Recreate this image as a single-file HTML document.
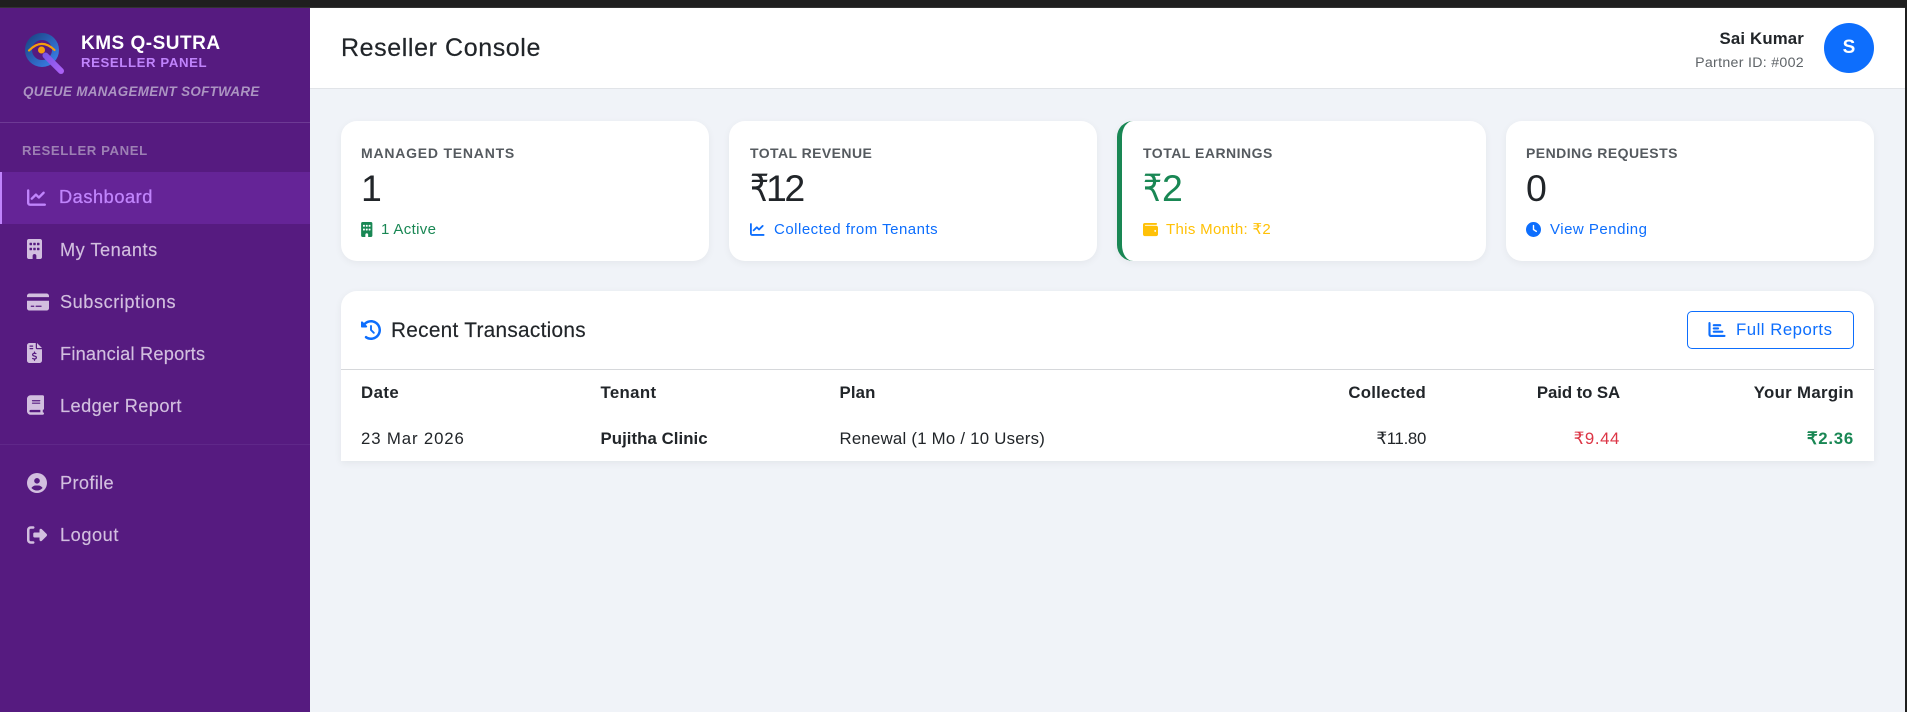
<!DOCTYPE html>
<html lang="en">
<head>
<meta charset="utf-8">
<title>Reseller Console</title>
<style>
html,body{margin:0;padding:0;width:1907px;height:712px;overflow:hidden;background:#1f1f1f}
body{font-family:"Liberation Sans",Arial,sans-serif;position:relative}
.b{position:absolute}
.t{position:absolute;white-space:nowrap;line-height:20px;height:20px}
.r{text-align:right}
svg{position:absolute;display:block}
.nav{color:#d2bfdf;font-size:18.2px;-webkit-text-stroke:.15px #d2bfdf}
.card{position:absolute;top:121px;height:140px;background:#fff;border-radius:16px;box-shadow:0 2px 8px rgba(0,0,0,.05);box-sizing:border-box}
.lab{color:#555a5f;font-size:14px;font-weight:bold;top:143px}
.val{color:#212529;font-size:37.5px;top:178px;line-height:20px}
.rs{display:inline-block;transform:scaleX(.8);transform-origin:0 50%}
.sub{font-size:15px;top:220px}
.th{color:#212529;font-size:16.8px;font-weight:bold;top:383px}
.td{color:#212529;font-size:16.8px;top:429px}
</style>
</head>
<body>
<div class="b" style="left:0;top:7px;width:1905px;height:1px;background:#333"></div>
<div class="b" style="left:0;top:8px;width:1905px;height:704px;background:#f0f3f8"></div>

<!-- sidebar -->
<div class="b" style="left:0;top:8px;width:310px;height:704px;background:#561b80"></div>
<div class="b" style="left:0;top:122px;width:310px;height:1px;background:#6d3a94"></div>
<div class="b" style="left:0;top:444px;width:310px;height:1px;background:#5f2889"></div>

<svg style="left:20px;top:30px" width="50" height="48" viewBox="0 0 50 48">
<defs><linearGradient id="g" x1="0" y1="0" x2="1" y2="1"><stop offset="0" stop-color="#1c4688"/><stop offset="1" stop-color="#3a7fe8"/></linearGradient>
<linearGradient id="h" x1="0" y1="0" x2="1" y2="1"><stop offset="0" stop-color="#7c55e6"/><stop offset="1" stop-color="#a960f5"/></linearGradient></defs>
<circle cx="22" cy="20" r="13.500" fill="none" stroke="url(#g)" stroke-width="7"/>
<path d="M25.500 25.500L41 41" stroke="url(#h)" stroke-width="6" stroke-linecap="round"/>
<path d="M9 20.500Q21.500 7.500 34.500 20" fill="none" stroke="#f59e0b" stroke-width="2.200" stroke-linecap="round"/>
<circle cx="21.500" cy="20" r="3.500" fill="#f59e0b"/>
</svg>

<div class="t" style="left:81px;top:34px;color:#fff;font-size:19px;font-weight:bold;letter-spacing:.5px">KMS Q-SUTRA</div>
<div class="t" style="left:81px;top:53px;color:#c084fc;font-size:13.2px;font-weight:bold;letter-spacing:.6px">RESELLER PANEL</div>
<div class="t" style="left:23px;top:82px;color:#ac95c2;font-size:13.4px;font-weight:bold;font-style:italic;letter-spacing:.33px">QUEUE MANAGEMENT SOFTWARE</div>
<div class="t" style="left:22px;top:141px;color:#9d80b4;font-size:13.2px;font-weight:bold;letter-spacing:.57px">RESELLER PANEL</div>

<div class="b" style="left:0;top:172px;width:310px;height:52px;background:#652497"></div>
<div class="b" style="left:0;top:172px;width:2px;height:52px;background:#c084fc"></div>

<svg style="left:27px;top:189px" width="19" height="17" viewBox="0 32 512 448" fill="#c084fc"><path d="M64 64c0-17.700-14.300-32-32-32S0 46.300 0 64V400c0 44.200 35.800 80 80 80H480c17.700 0 32-14.300 32-32s-14.300-32-32-32H80c-8.800 0-16-7.200-16-16V64zm406.600 86.600c12.500-12.500 12.500-32.800 0-45.300s-32.800-12.500-45.300 0L320 210.700l-57.400-57.400c-12.500-12.500-32.800-12.500-45.300 0l-112 112c-12.500 12.500-12.500 32.800 0 45.300s32.800 12.500 45.300 0L240 221.300l57.400 57.400c12.500 12.500 32.800 12.500 45.300 0l128-128z"/></svg>
<div class="t" style="left:59px;top:187px;color:#c084fc;font-size:18.2px;letter-spacing:.55px;-webkit-text-stroke:.3px #c084fc">Dashboard</div>

<svg style="left:27px;top:239px" width="15" height="20" viewBox="0 0 384 512" fill="#d2bfdf"><path d="M48 0C21.500 0 0 21.500 0 48V464c0 26.500 21.500 48 48 48h96V432c0-26.500 21.500-48 48-48s48 21.500 48 48v80h96c26.500 0 48-21.500 48-48V48c0-26.500-21.500-48-48-48H48zM64 240c0-8.800 7.200-16 16-16h32c8.800 0 16 7.200 16 16v32c0 8.800-7.200 16-16 16H80c-8.800 0-16-7.200-16-16V240zm112-16h32c8.800 0 16 7.200 16 16v32c0 8.800-7.200 16-16 16H176c-8.800 0-16-7.200-16-16V240c0-8.800 7.200-16 16-16zm80 16c0-8.800 7.200-16 16-16h32c8.800 0 16 7.200 16 16v32c0 8.800-7.200 16-16 16H272c-8.800 0-16-7.200-16-16V240zM80 96h32c8.800 0 16 7.200 16 16v32c0 8.800-7.200 16-16 16H80c-8.800 0-16-7.200-16-16V112c0-8.800 7.200-16 16-16zm80 16c0-8.800 7.200-16 16-16h32c8.800 0 16 7.200 16 16v32c0 8.800-7.200 16-16 16H176c-8.800 0-16-7.200-16-16V112zM272 96h32c8.800 0 16 7.200 16 16v32c0 8.800-7.200 16-16 16H272c-8.800 0-16-7.200-16-16V112c0-8.800 7.200-16 16-16z"/></svg>
<div class="t nav" style="left:60px;top:240px;letter-spacing:.5px">My Tenants</div>

<svg style="left:27px;top:292px" width="22" height="20" viewBox="0 0 576 512" fill="#d2bfdf"><path d="M64 32C28.700 32 0 60.700 0 96v32H576V96c0-35.300-28.700-64-64-64H64zM576 224H0V416c0 35.300 28.700 64 64 64H512c35.300 0 64-28.700 64-64V224zM112 352h64c8.800 0 16 7.200 16 16s-7.200 16-16 16H112c-8.800 0-16-7.200-16-16s7.200-16 16-16zm112 16c0-8.800 7.200-16 16-16H368c8.800 0 16 7.200 16 16s-7.200 16-16 16H240c-8.800 0-16-7.200-16-16z"/></svg>
<div class="t nav" style="left:60px;top:292px;letter-spacing:.53px">Subscriptions</div>

<svg style="left:27px;top:343px" width="15" height="20" viewBox="0 0 384 512" fill="#d2bfdf"><path d="M64 0C28.700 0 0 28.700 0 64V448c0 35.300 28.700 64 64 64H320c35.300 0 64-28.700 64-64V160H256c-17.700 0-32-14.300-32-32V0H64zM256 0V128H384L256 0zM64 80c0-8.800 7.200-16 16-16h64c8.800 0 16 7.200 16 16s-7.200 16-16 16H80c-8.800 0-16-7.200-16-16zm0 64c0-8.800 7.200-16 16-16h64c8.800 0 16 7.200 16 16s-7.200 16-16 16H80c-8.800 0-16-7.200-16-16zm128 72c8.800 0 16 7.200 16 16v17.300c8.500 1.200 16.700 3.100 24.100 5.100c8.500 2.300 13.600 11 11.300 19.600s-11 13.600-19.600 11.300c-11.100-3-22-5.200-32.100-5.300c-8.400-.1-17.400 1.800-23.600 5.500c-5.700 3.400-8.100 7.300-8.100 12.800c0 3.700 1.300 6.500 7.300 10.100c6.900 4.100 16.600 7.100 29.200 10.900l.5 .1 0 0 0 0c11.300 3.400 25.300 7.600 36.300 14.600c12.100 7.600 22.400 19.700 22.700 38.200c.3 19.300-9.600 33.300-22.900 41.600c-7.700 4.800-16.400 7.600-25.100 9.100V440c0 8.800-7.200 16-16 16s-16-7.200-16-16V422.200c-11.200-2.100-21.700-5.700-30.900-8.900l0 0 0 0c-2.100-.7-4.200-1.400-6.200-2.100c-8.400-2.800-12.900-11.900-10.100-20.200s11.900-12.900 20.200-10.100c2.500 .8 4.800 1.600 7.100 2.400l0 0 0 0 0 0c13.600 4.600 24.600 8.400 36.300 8.700c9.100 .3 17.900-1.700 23.700-5.300c5.100-3.200 7.900-7.300 7.800-14c-.1-4.600-1.800-7.800-7.700-11.600c-6.800-4.300-16.500-7.400-29-11.200l-1.600-.5 0 0c-11-3.300-24.300-7.300-34.800-13.700c-12-7.200-22.600-18.900-22.700-37.300c-.1-19.400 10.800-32.800 23.800-40.500c7.500-4.400 15.800-7.200 24.100-8.700V232c0-8.800 7.200-16 16-16z"/></svg>
<div class="t nav" style="left:60px;top:344px;letter-spacing:.22px">Financial Reports</div>

<svg style="left:27px;top:395px" width="17" height="20" viewBox="0 0 448 512" fill="#d2bfdf"><path d="M96 0C43 0 0 43 0 96V416c0 53 43 96 96 96H384h32c17.700 0 32-14.300 32-32s-14.300-32-32-32V384c17.700 0 32-14.300 32-32V32c0-17.700-14.300-32-32-32H384 96zm0 384H352v64H96c-17.700 0-32-14.300-32-32s14.300-32 32-32zm32-240c0-8.800 7.200-16 16-16H336c8.800 0 16 7.200 16 16s-7.200 16-16 16H144c-8.800 0-16-7.200-16-16zm16 48H336c8.800 0 16 7.200 16 16s-7.200 16-16 16H144c-8.800 0-16-7.200-16-16s7.200-16 16-16z"/></svg>
<div class="t nav" style="left:60px;top:396px;letter-spacing:.43px">Ledger Report</div>

<svg style="left:27px;top:473px" width="20" height="20" viewBox="0 0 512 512" fill="#d2bfdf"><path d="M399 384.200C376.900 345.800 335.400 320 288 320H224c-47.400 0-88.900 25.800-111 64.200c35.200 39.200 86.200 63.800 143 63.800s107.800-24.700 143-63.800zM0 256a256 256 0 1 1 512 0A256 256 0 1 1 0 256zm256 16a72 72 0 1 0 0-144 72 72 0 1 0 0 144z"/></svg>
<div class="t nav" style="left:60px;top:473px;letter-spacing:.35px">Profile</div>

<svg style="left:27px;top:525px" width="20" height="20" viewBox="0 0 512 512" fill="#d2bfdf"><path d="M377.900 105.900L500.700 228.700c7.200 7.200 11.300 17.100 11.300 27.300s-4.100 20.100-11.300 27.300L377.900 406.100c-6.400 6.400-15 9.900-24 9.900c-18.700 0-33.900-15.200-33.900-33.900l0-62.100-128 0c-17.700 0-32-14.300-32-32l0-64c0-17.700 14.300-32 32-32l128 0 0-62.100c0-18.700 15.200-33.900 33.900-33.900c9 0 17.600 3.600 24 9.900zM160 96L96 96c-17.700 0-32 14.300-32 32l0 256c0 17.700 14.300 32 32 32l64 0c17.700 0 32 14.300 32 32s-14.300 32-32 32l-64 0c-53 0-96-43-96-96L0 128C0 75 43 32 96 32l64 0c17.700 0 32 14.300 32 32s-14.300 32-32 32z"/></svg>
<div class="t nav" style="left:60px;top:525px;letter-spacing:.55px">Logout</div>

<!-- header -->
<div class="b" style="left:310px;top:8px;width:1595px;height:80px;background:#fff;border-bottom:1px solid #e1e4e8"></div>
<div class="t" style="left:341px;top:38px;color:#212529;font-size:25px;letter-spacing:.6px;-webkit-text-stroke:.2px #212529">Reseller Console</div>
<div class="t r" style="right:103px;top:29px;color:#212529;font-size:16.8px;font-weight:bold;letter-spacing:.16px">Sai Kumar</div>
<div class="t r" style="right:103px;top:53px;color:#5f6468;font-size:14.2px;letter-spacing:.3px">Partner ID: #002</div>
<div class="b" style="left:1824px;top:23px;width:50px;height:50px;border-radius:50%;background:#0d6efd;color:#fff;font-size:19px;font-weight:bold;line-height:50px;text-align:center">S</div>

<!-- cards -->
<div class="card" style="left:341px;width:368px"></div>
<div class="card" style="left:729px;width:368px"></div>
<div class="card" style="left:1117px;width:369px;border-left:5px solid #198754"></div>
<div class="card" style="left:1506px;width:368px"></div>

<div class="t lab" style="left:361px;letter-spacing:.78px">MANAGED TENANTS</div>
<div class="t val" style="left:361px">1</div>
<svg style="left:361px;top:222px" width="11.500" height="15" viewBox="0 0 384 512" fill="#198754"><path d="M48 0C21.500 0 0 21.500 0 48V464c0 26.500 21.500 48 48 48h96V432c0-26.500 21.500-48 48-48s48 21.500 48 48v80h96c26.500 0 48-21.500 48-48V48c0-26.500-21.500-48-48-48H48zM64 240c0-8.800 7.200-16 16-16h32c8.800 0 16 7.200 16 16v32c0 8.800-7.200 16-16 16H80c-8.800 0-16-7.200-16-16V240zm112-16h32c8.800 0 16 7.200 16 16v32c0 8.800-7.200 16-16 16H176c-8.800 0-16-7.200-16-16V240c0-8.800 7.200-16 16-16zm80 16c0-8.800 7.200-16 16-16h32c8.800 0 16 7.200 16 16v32c0 8.800-7.200 16-16 16H272c-8.800 0-16-7.200-16-16V240zM80 96h32c8.800 0 16 7.200 16 16v32c0 8.800-7.200 16-16 16H80c-8.800 0-16-7.200-16-16V112c0-8.800 7.200-16 16-16zm80 16c0-8.800 7.200-16 16-16h32c8.800 0 16 7.200 16 16v32c0 8.800-7.200 16-16 16H176c-8.800 0-16-7.200-16-16V112zM272 96h32c8.800 0 16 7.200 16 16v32c0 8.800-7.200 16-16 16H272c-8.800 0-16-7.200-16-16V112c0-8.800 7.200-16 16-16z"/></svg>
<div class="t sub" style="left:381px;color:#198754;letter-spacing:.35px">1 Active</div>

<div class="t lab" style="left:750px;letter-spacing:.43px">TOTAL REVENUE</div>
<div class="t val" style="left:750px"><span class="rs" style="width:16px">₹</span><span style="letter-spacing:-2.500px">1</span>2</div>
<svg style="left:750px;top:223px" width="14.500" height="13" viewBox="0 32 512 448" fill="#0d6efd"><path d="M64 64c0-17.700-14.300-32-32-32S0 46.300 0 64V400c0 44.200 35.800 80 80 80H480c17.700 0 32-14.300 32-32s-14.300-32-32-32H80c-8.800 0-16-7.200-16-16V64zm406.600 86.600c12.500-12.500 12.500-32.800 0-45.300s-32.800-12.500-45.300 0L320 210.700l-57.400-57.400c-12.500-12.500-32.800-12.500-45.300 0l-112 112c-12.500 12.500-12.500 32.800 0 45.300s32.800 12.500 45.300 0L240 221.300l57.400 57.400c12.500 12.500 32.800 12.500 45.300 0l128-128z"/></svg>
<div class="t sub" style="left:774px;color:#0d6efd;letter-spacing:.5px">Collected from Tenants</div>

<div class="t lab" style="left:1143px;letter-spacing:.5px">TOTAL EARNINGS</div>
<div class="t val" style="left:1143px;color:#198754"><span class="rs" style="width:19px">₹</span>2</div>
<svg style="left:1143px;top:222px" width="15" height="15" viewBox="0 0 512 512" fill="#ffc107"><path d="M64 32C28.700 32 0 60.700 0 96V416c0 35.300 28.700 64 64 64H448c35.300 0 64-28.700 64-64V192c0-35.300-28.700-64-64-64H80c-8.800 0-16-7.200-16-16s7.200-16 16-16H448c17.700 0 32-14.300 32-32s-14.300-32-32-32H64zM416 272a32 32 0 1 1 0 64 32 32 0 1 1 0-64z"/></svg>
<div class="t sub" style="left:1166px;color:#ffc107;letter-spacing:.33px">This Month: ₹2</div>

<div class="t lab" style="left:1526px;letter-spacing:.45px">PENDING REQUESTS</div>
<div class="t val" style="left:1526px">0</div>
<svg style="left:1526px;top:222px" width="15" height="15" viewBox="0 0 512 512" fill="#0d6efd"><path d="M256 0a256 256 0 1 1 0 512A256 256 0 1 1 256 0zM232 120V256c0 8 4 15.500 10.700 20l96 64c11 7.400 25.900 4.400 33.300-6.700s4.400-25.900-6.700-33.300L280 243.200V120c0-13.300-10.700-24-24-24s-24 10.700-24 24z"/></svg>
<div class="t sub" style="left:1550px;color:#0d6efd;letter-spacing:.5px">View Pending</div>

<!-- table card -->
<div class="b" style="left:341px;top:291px;width:1533px;height:170px;background:#fff;border-radius:16px 16px 0 0;box-shadow:0 2px 8px rgba(0,0,0,.06)"></div>
<div class="b" style="left:341px;top:369px;width:1533px;height:1px;background:#d6d8db"></div>

<svg style="left:361px;top:320px" width="20" height="20" viewBox="0 0 512 512" fill="#0d6efd"><path d="M75 75L41 41C25.900 25.900 0 36.600 0 57.900V168c0 13.300 10.700 24 24 24H134.100c21.400 0 32.100-25.900 17-41l-30.800-30.800C155 85.500 203 64 256 64c106 0 192 86 192 192s-86 192-192 192c-40.800 0-78.600-12.700-109.700-34.400c-14.500-10.100-34.400-6.600-44.600 7.900s-6.600 34.400 7.900 44.600C151.200 495 201.700 512 256 512c141.400 0 256-114.600 256-256S397.400 0 256 0C185.300 0 121.300 28.700 75 75zm181 53c-13.300 0-24 10.700-24 24V256c0 6.400 2.500 12.500 7 17l72 72c9.400 9.400 24.600 9.400 33.900 0s9.400-24.600 0-33.900l-65-65V152c0-13.300-10.700-24-24-24z"/></svg>
<div class="t" style="left:391px;top:321px;color:#212529;font-size:20.8px;letter-spacing:.28px;-webkit-text-stroke:.15px #212529">Recent Transactions</div>

<div class="b" style="left:1687px;top:311px;width:165px;height:36px;border:1px solid #0d6efd;border-radius:5px"></div>
<svg style="left:1708px;top:322px" width="18" height="15" viewBox="0 32 512 448" fill="#0d6efd"><path d="M32 32c17.700 0 32 14.300 32 32V400c0 8.800 7.200 16 16 16H480c17.700 0 32 14.300 32 32s-14.300 32-32 32H80c-44.200 0-80-35.800-80-80V64C0 46.300 14.300 32 32 32zm96 96c0-17.700 14.300-32 32-32l192 0c17.700 0 32 14.300 32 32s-14.300 32-32 32l-192 0c-17.700 0-32-14.300-32-32zm32 64H288c17.700 0 32 14.300 32 32s-14.300 32-32 32H160c-17.700 0-32-14.300-32-32s14.300-32 32-32zm0 96H416c17.700 0 32 14.300 32 32s-14.300 32-32 32H160c-17.700 0-32-14.300-32-32s14.300-32 32-32z"/></svg>
<div class="t" style="left:1736px;top:320px;color:#0d6efd;font-size:16.8px;letter-spacing:.5px">Full Reports</div>

<div class="t th" style="left:361px;letter-spacing:.46px">Date</div>
<div class="t th" style="left:600.500px;letter-spacing:.36px">Tenant</div>
<div class="t th" style="left:839.500px;letter-spacing:.16px">Plan</div>
<div class="t th r" style="right:481px;letter-spacing:.23px">Collected</div>
<div class="t th r" style="right:287px;letter-spacing:-.08px">Paid to SA</div>
<div class="t th r" style="right:53px;letter-spacing:.33px">Your Margin</div>

<div class="t td" style="left:361px;letter-spacing:.86px">23 Mar 2026</div>
<div class="t td" style="left:600.500px;font-weight:bold;letter-spacing:.06px">Pujitha Clinic</div>
<div class="t td" style="left:839.500px;letter-spacing:.24px">Renewal (1 Mo / 10 Users)</div>
<div class="t td r" style="right:481px;letter-spacing:-.3px">₹11.80</div>
<div class="t td r" style="right:287px;color:#dc3545;letter-spacing:.6px">₹9.44</div>
<div class="t td r" style="right:53px;color:#198754;font-weight:bold;letter-spacing:.76px">₹2.36</div>
</body>
</html>
